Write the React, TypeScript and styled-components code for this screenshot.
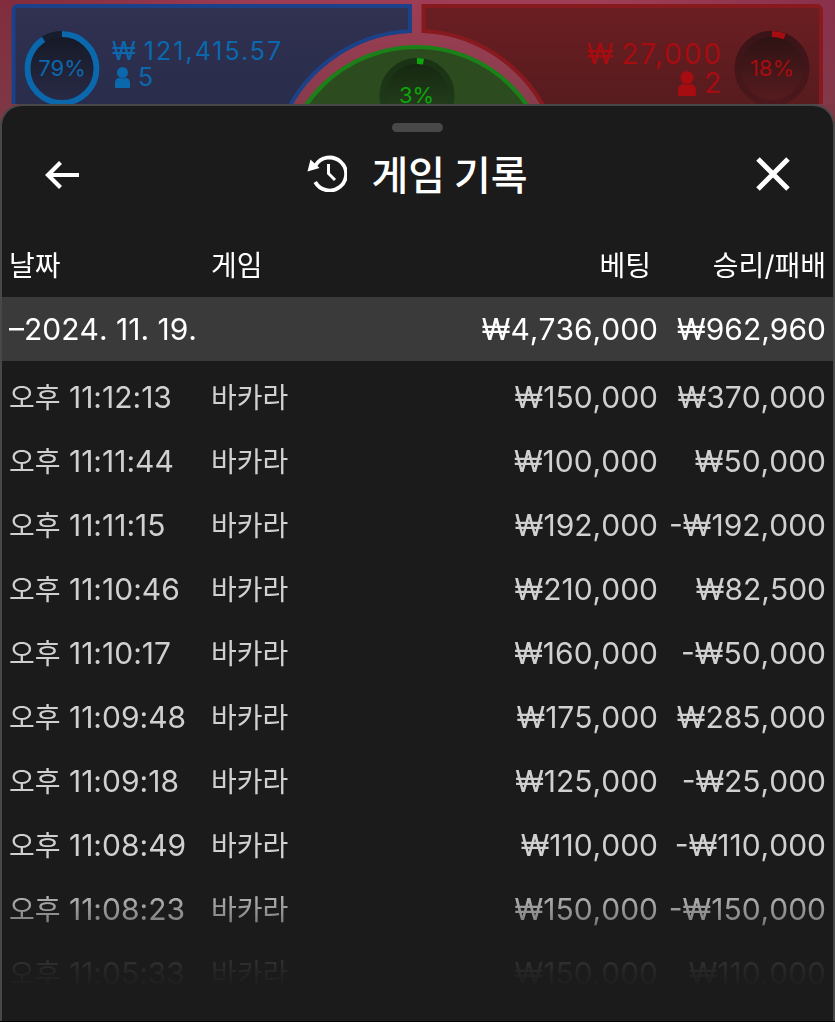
import React from 'react';
import styled, { createGlobalStyle } from 'styled-components';

const GlobalStyle = createGlobalStyle`
  *, *::before, *::after { box-sizing: border-box; }
  body {
    margin: 0;
    background: #000;
    color: #fff;
    font-family: Inter, "Noto Sans CJK KR", sans-serif;
  }
`;

const Page = styled.div`
  min-height: 100vh;
  display: flex;
  flex-direction: column;
`;

const Table = styled.header`
  position: relative;
  height: 104px;
  display: flex;
  justify-content: space-between;
  padding: 30px 25px 0 24px;
  background: linear-gradient(90deg, #812c3c 0, #9c3b54 30%, #a03f56 70%, #8a304c 100%);
`;

const Felt = styled.svg`
  position: absolute;
  top: 0;
  left: 0;
  width: 100%;
  height: 130px;
`;

const Side = styled.section<{ $color: string; $end?: boolean }>`
  position: relative;
  display: flex;
  flex-direction: ${(p) => (p.$end ? 'row-reverse' : 'row')};
  align-items: flex-start;
  gap: ${(p) => (p.$end ? '11px' : '12px')};
  color: ${(p) => p.$color};
`;

const Stats = styled.div<{ $large?: boolean }>`
  display: flex;
  flex-direction: column;
  align-items: ${(p) => (p.$large ? 'flex-end' : 'flex-start')};
  padding-top: ${(p) => (p.$large ? '10px' : '8px')};
  font-size: ${(p) => (p.$large ? '28px' : '25px')};
  line-height: ${(p) => (p.$large ? '29px' : '26px')};
  letter-spacing: 2px;
`;

const StatLine = styled.div<{ $inset?: boolean }>`
  display: flex;
  align-items: center;
  gap: ${(p) => (p.$inset ? '8px' : '6px')};
  padding-left: ${(p) => (p.$inset ? '3px' : '0')};
`;

const Ring = styled.div`
  position: relative;
  width: 76px;
  height: 76px;
  display: flex;
  align-items: center;
  justify-content: center;
  font-size: 22px;
`;

const RingArt = styled.svg`
  position: absolute;
  inset: 0;
`;

const RingText = styled.span`
  position: relative;
`;

const TieRing = styled.div`
  position: absolute;
  left: 50%;
  top: 57px;
  margin-left: -39px;
  color: #0ca50c;
`;

const Sheet = styled.main`
  position: relative;
  flex: 1;
  margin-bottom: 1px;
  background: #1b1b1b;
  border: 2px solid #484848;
  border-bottom: 0;
  border-radius: 22px 22px 0 0;
`;

const SheetBackdrop = styled.div`
  position: relative;
  flex: 1;
  display: flex;
  flex-direction: column;
  background: linear-gradient(#7e3845 0 0) top / 100% 30px no-repeat;
`;

const Handle = styled.div`
  width: 51px;
  height: 9px;
  margin: 17px auto 0;
  border-radius: 5px;
  background: #484848;
`;

const TitleBar = styled.div`
  display: flex;
  align-items: center;
  justify-content: space-between;
  height: 84px;
  padding: 0 36px;
`;

const IconButton = styled.button`
  display: flex;
  align-items: center;
  justify-content: center;
  width: 48px;
  height: 48px;
  padding: 0;
  border: 0;
  background: none;
  color: inherit;
  cursor: pointer;
`;

const Title = styled.h1`
  display: flex;
  align-items: center;
  gap: 24px;
  margin: 0;
  padding-bottom: 2px;
  font-size: 40px;
  line-height: 48px;
  font-weight: 500;
  font-family: "Noto Sans CJK KR", sans-serif;
`;

const History = styled.div`
  mask-image: linear-gradient(#000 665px, rgba(0, 0, 0, 0.6) 702px, rgba(0, 0, 0, 0.18) 734px, rgba(0, 0, 0, 0.06) 756px, transparent 774px);
`;

const Records = styled.table`
  width: 100%;
  table-layout: fixed;
  border-collapse: collapse;
  font-size: 30px;
  font-kerning: none;
  line-height: 40px;
  white-space: nowrap;
`;

const Col = styled.col<{ $width?: string }>`
  width: ${(p) => p.$width ?? 'auto'};
`;

const HeadCell = styled.th<{ $end?: boolean; $inset?: boolean }>`
  height: 81px;
  padding: 18px ${(p) => (p.$inset ? '14px' : '7px')} 0 7px;
  font-size: 28px;
  font-weight: 400;
  text-align: ${(p) => (p.$end ? 'right' : 'left')};
`;

const Cell = styled.td<{ $end?: boolean }>`
  height: 64px;
  padding: ${(p) => (p.$end ? '0 7px 0 0' : '0 0 0 7px')};
  text-align: ${(p) => (p.$end ? 'right' : 'left')};
`;

const DayRow = styled.tr`
  background: #3a3a3a;
`;

const Rounds = styled.tbody`
  color: #d0d0d0;
  &::before {
    content: '';
    display: block;
    height: 4px;
  }
`;

const Hangul = styled.span`
  font-size: 28px;
`;

const rounds: [string, string, string][] = [
  ['11:12:13', '₩150,000', '₩370,000'],
  ['11:11:44', '₩100,000', '₩50,000'],
  ['11:11:15', '₩192,000', '-₩192,000'],
  ['11:10:46', '₩210,000', '₩82,500'],
  ['11:10:17', '₩160,000', '-₩50,000'],
  ['11:09:48', '₩175,000', '₩285,000'],
  ['11:09:18', '₩125,000', '-₩25,000'],
  ['11:08:49', '₩110,000', '-₩110,000'],
  ['11:08:23', '₩150,000', '-₩150,000'],
  ['11:05:33', '₩150,000', '₩110,000'],
];

const Person = ({ size }: { size: number }) => (
  <svg width={Math.round(size * 0.7)} height={size} viewBox="0 0 15 21" fill="currentColor" aria-hidden="true">
    <circle cx="7.5" cy="5.500" r="5.500" />
    <path d="M0 21v-5a5.500 5.500 0 0 1 4-5.200q3.500 1.600 7 0a5.500 5.500 0 0 1 4 5.200v5z" />
  </svg>
);

type GaugeProps = { id: string; value: number; arc: number; dark: string; light: string; track: string };

const Gauge = ({ id, value, arc, dark, light, track }: GaugeProps) => (
  <Ring>
    <RingArt viewBox="0 0 76 76" aria-hidden="true">
      <defs>
        <linearGradient id={id} x1="0" y1="0" x2="0" y2="1">
          <stop offset="0" stopColor={dark} />
          <stop offset="1" stopColor={light} />
        </linearGradient>
      </defs>
      <circle cx="38" cy="38.500" r="37.500" fill={`url(#${id})`} />
      <circle cx="38" cy="38.500" r="34.500" fill="none" stroke={track} strokeOpacity="0.6" strokeWidth="6" />
      <circle
        cx="38"
        cy="38.500"
        r="34.500"
        fill="none"
        stroke="currentColor"
        strokeWidth="6"
        pathLength="100"
        strokeDasharray={`${arc} 100`}
        transform="rotate(-90 38 38.500)"
      />
    </RingArt>
    <RingText>{value}%</RingText>
  </Ring>
);

export default function App() {
  return (
    <Page>
      <GlobalStyle />
      <Table>
        <Felt viewBox="0 0 835 130" preserveAspectRatio="xMidYMin slice" aria-hidden="true">
          <defs>
            <linearGradient id="rose" x1="0" y1="0" x2="0" y2="1">
              <stop offset="0" stopColor="#7e3c48" stopOpacity="0" />
              <stop offset="1" stopColor="#7e3c48" stopOpacity="0.9" />
            </linearGradient>
            <linearGradient id="blue" x1="0" y1="0" x2="0" y2="1">
              <stop offset="0" stopColor="#313152" />
              <stop offset="1" stopColor="#272b49" />
            </linearGradient>
            <linearGradient id="red" x1="0" y1="0" x2="0" y2="1">
              <stop offset="0" stopColor="#6b1e22" />
              <stop offset="1" stopColor="#521b1d" />
            </linearGradient>
          </defs>
          <rect width="835" height="130" fill="url(#rose)" />
          <g strokeWidth="4">
            <path d="M13.500 130V10a4 4 0 0 1 4-4H410V31A144.300 144.300 0 0 0 279.500 130z" fill="url(#blue)" stroke="#1b4188" />
            <path d="M821 130V10a4 4 0 0 0-4-4H423.500V31A144.300 144.300 0 0 1 553.500 130z" fill="url(#red)" stroke="#871a1e" />
          </g>
          <circle cx="416.500" cy="181" r="134" fill="#2c4c20" stroke="#1a8118" strokeWidth="4" />
        </Felt>
        <Side $color="#0b68ad">
          <Gauge id="player" value={79} arc={91} dark="#141823" light="#2a2c49" track="#172236" />
          <Stats>
            <StatLine>
              <span>₩</span>
              <span>121,415.57</span>
            </StatLine>
            <StatLine $inset>
              <Person size={21} />
              <span>5</span>
            </StatLine>
          </Stats>
        </Side>
        <TieRing>
          <Gauge id="tie" value={3} arc={3} dark="#142410" light="#2b4a20" track="#1e3b18" />
        </TieRing>
        <Side $color="#a60c10" $end>
          <Gauge id="banker" value={18} arc={6} dark="#2a1213" light="#5a1c1f" track="#43161a" />
          <Stats $large>
            <StatLine>
              <span>₩</span>
              <span>27,000</span>
            </StatLine>
            <StatLine $inset>
              <Person size={25} />
              <span>2</span>
            </StatLine>
          </Stats>
        </Side>
      </Table>
      <SheetBackdrop>
        <Sheet>
          <Handle />
          <TitleBar>
            <IconButton aria-label="뒤로">
              <svg width="36" height="30" viewBox="0 0 36 30" fill="none" stroke="currentColor" strokeWidth="4.200">
                <path d="M35 16H4M16.500 3.500 4 16l12.500 12.500" />
              </svg>
            </IconButton>
            <Title>
              <svg width="40" height="38" viewBox="0 0 40 38" fill="none" stroke="currentColor" aria-hidden="true">
                <path d="M8.500 11.500A16.500 16.500 0 1 1 8.200 28" strokeWidth="3.800" />
                <path d="M21.500 10v9.500l6.500 6.500" strokeWidth="3" />
                <path d="M0.500 17.500 3.500 5.500l9 8.500z" fill="currentColor" stroke="none" />
              </svg>
              게임 기록
            </Title>
            <IconButton aria-label="닫기">
              <svg width="34" height="34" viewBox="0 0 34 34" fill="none" stroke="currentColor" strokeWidth="5">
                <path d="M2 2l30 30M32 2 2 32" />
              </svg>
            </IconButton>
          </TitleBar>
          <History>
            <Records>
              <colgroup>
                <Col $width="202px" />
                <Col />
                <Col $width="200px" />
                <Col $width="168px" />
              </colgroup>
              <thead>
                <tr>
                  <HeadCell scope="col">날짜</HeadCell>
                  <HeadCell scope="col">게임</HeadCell>
                  <HeadCell scope="col" $end $inset>베팅</HeadCell>
                  <HeadCell scope="col" $end>승리/패배</HeadCell>
                </tr>
              </thead>
              <tbody>
                <DayRow>
                  <Cell colSpan={2}>–2024. 11. 19.</Cell>
                  <Cell $end>₩4,736,000</Cell>
                  <Cell $end>₩962,960</Cell>
                </DayRow>
              </tbody>
              <Rounds>
                {rounds.map(([time, bet, result]) => (
                  <tr key={time}>
                    <Cell>
                      <Hangul>오후</Hangul> {time}
                    </Cell>
                    <Cell>
                      <Hangul>바카라</Hangul>
                    </Cell>
                    <Cell $end>{bet}</Cell>
                    <Cell $end>{result}</Cell>
                  </tr>
                ))}
              </Rounds>
            </Records>
          </History>
        </Sheet>
      </SheetBackdrop>
    </Page>
  );
}
